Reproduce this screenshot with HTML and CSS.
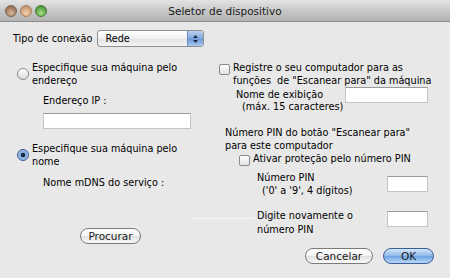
FILE: index.html
```html
<!DOCTYPE html>
<html lang="pt">
<head>
  <meta charset="UTF-8">
  <title>Seletor de dispositivo</title>
  <link rel="stylesheet" href="styles.css">
</head>
<body>
  <div class="window">
    <!-- Title bar -->
    <div class="titlebar">
      <div class="lights">
        <span class="light close"></span>
        <span class="light minimize"></span>
        <span class="light zoom"></span>
      </div>
      <div class="title">Seletor de dispositivo</div>
    </div>

    <div class="content">
      <div class="conn-row">
        <span>Tipo de conexão</span>
        <div class="popup">
          <span>Rede</span>
          <span class="stepper">
            <svg width="7" height="10" viewBox="0 0 7 10"><path d="M3.5 1 L6 4 L1 4 Z M3.5 9 L6 6 L1 6 Z" fill="#1b2a44"/></svg>
          </span>
        </div>
      </div>

      <div class="columns">
        <!-- Left column -->
        <div class="col-left">
          <label class="option">
            <span class="radio"></span>
            <span>Especifique sua máquina pelo<br>endereço</span>
          </label>
          <div class="field-label ip-label">Endereço IP :</div>
          <div class="textbox ip-box"></div>

          <label class="option option-name">
            <span class="radio checked"></span>
            <span>Especifique sua máquina pelo<br>nome</span>
          </label>
          <div class="field-label mdns-label">Nome mDNS do serviço :</div>
          <div class="mdns-line"></div>
          <div class="search-row">
            <button class="btn search">Procurar</button>
          </div>
        </div>

        <!-- Right column -->
        <div class="col-right">
          <label class="check-row">
            <span class="checkbox"></span>
            <span>Registre o seu computador para as<br>funções &nbsp;de "Escanear para" da máquina</span>
          </label>
          <div class="pair display-name">
            <span class="pair-label">Nome de exibição<br><span class="sub">(máx. 15 caracteres)</span></span>
            <div class="textbox name-box"></div>
          </div>

          <div class="pin-title">Número PIN do botão "Escanear para"<br>para este computador</div>
          <label class="check-row pin-check">
            <span class="checkbox"></span>
            <span>Ativar proteção pelo número PIN</span>
          </label>
          <div class="pair pin-pair">
            <span class="pair-label">Número PIN<br><span class="sub">('0' a '9', 4 dígitos)</span></span>
            <div class="textbox pin-box"></div>
          </div>
          <div class="pair pin-pair again">
            <span class="pair-label">Digite novamente o<br>número PIN</span>
            <div class="textbox pin-box"></div>
          </div>
        </div>
      </div>

      <div class="footer">
        <button class="btn cancel">Cancelar</button>
        <button class="btn ok">OK</button>
      </div>
    </div>
  </div>
</body>
</html>
```

FILE: styles.css
```css
/* Base */
body {
  margin: 0;
  background: #e8e8e8;
  font-family: "DejaVu Sans", "Liberation Sans", sans-serif;
  font-size: 9.7px;
  color: #000;
}

.window {
  width: 450px;
  height: 278px;
  overflow: hidden;
  background: #e8e8e8;
}

/* Title bar */
.titlebar {
  height: 21px;
  display: flex;
  align-items: center;
  position: relative;
  background: linear-gradient(#e4e4e4, #c6c6c6 55%, #b2b2b2);
  border-bottom: 1px solid #8c8c8c;
}

.lights {
  display: flex;
  gap: 3px;
  padding-left: 5px;
}

.light {
  width: 12px;
  height: 12px;
  border-radius: 50%;
  box-sizing: border-box;
  border: 1px solid #7d6450;
}

.close {
  background: radial-gradient(circle at 50% 70%, #d9b595, #9a7358 70%);
}

.minimize {
  background: radial-gradient(circle at 50% 70%, #f2d1ae, #c99a72 70%);
  border-color: #a47e5c;
}

.zoom {
  background: radial-gradient(circle at 50% 70%, #a8e08a, #4f9a3a 70%);
  border-color: #4a7a3a;
}

.title {
  position: absolute;
  left: 0;
  right: 0;
  text-align: center;
  font-size: 10.5px;
  color: #1a1a1a;
}

/* Content */
.content {
  padding: 8px 0 0 13px;
}

.conn-row {
  display: flex;
  align-items: center;
  gap: 5px;
  height: 17px;
}

.popup {
  width: 107px;
  height: 17px;
  box-sizing: border-box;
  border: 1px solid #8f8f8f;
  border-radius: 3px;
  background: linear-gradient(#ffffff, #f0f0f0 50%, #e2e2e2 51%, #f4f4f4);
  display: flex;
  align-items: center;
  justify-content: space-between;
  padding-left: 7px;
  overflow: hidden;
}

.stepper {
  width: 15px;
  height: 15px;
  display: flex;
  align-items: center;
  justify-content: center;
  background: linear-gradient(#bcd4f2, #7ea6dc 50%, #6a95d4 51%, #a9c8f0);
  border-left: 1px solid #6f8fbf;
}

.columns {
  display: flex;
}

.col-left {
  width: 206px;
  flex-shrink: 0;
}

.col-right {
  flex: 1;
  white-space: nowrap;
}

/* Radio options */
.option {
  display: flex;
  align-items: center;
  gap: 3px;
  margin-top: 14px;
  line-height: 13px;
  white-space: nowrap;
}

.radio {
  width: 12px;
  height: 12px;
  border-radius: 50%;
  box-sizing: border-box;
  border: 1px solid #8a8a8a;
  background: linear-gradient(#ffffff, #dcdcdc);
  margin-left: 4px;
  flex-shrink: 0;
}

.radio.checked {
  border-color: #3a5b8c;
  background: radial-gradient(circle, #1c2a40 0, #1c2a40 2px, #7ea8de 2.5px, #b8d2f2);
}

.field-label {
  margin-left: 30px;
  margin-top: 7px;
  line-height: 13px;
}

.textbox {
  background: #fff;
  box-sizing: border-box;
  border: 1px solid #c4c4c4;
  border-top-color: #9a9a9a;
  height: 16px;
}

.ip-box {
  margin: 6px 0 0 30px;
  width: 148px;
}

.option-name {
  margin-top: 13px;
}

.mdns-label {
  margin-top: 8px;
}

.mdns-line {
  height: 1px;
  margin: 29px 0 0 179px;
  width: 63px;
  background: #f6f6f6;
}

.search-row {
  margin: 9px 0 0 67px;
}

/* Buttons */
.btn {
  font-family: inherit;
  font-size: 10.5px;
  height: 16px;
  padding: 0;
  border: 1px solid #7a7a7a;
  border-radius: 8px;
  background: linear-gradient(#ffffff, #f2f2f2 50%, #e0e0e0 51%, #fafafa);
  color: #1a1a1a;
  line-height: 13px;
}

.search {
  width: 61px;
}

.footer {
  display: flex;
  justify-content: flex-end;
  gap: 10px;
  padding-right: 16px;
  margin-top: 4px;
}

.cancel {
  width: 68px;
}

.ok {
  width: 51px;
  border-color: #3b5f95;
  background: linear-gradient(#d4e6fb, #8db8ea 50%, #6ea2e0 51%, #b9d8f8);
}

/* Right column */
.check-row {
  display: flex;
  align-items: flex-start;
  gap: 3px;
  line-height: 13px;
  margin-top: 13px;
}

.checkbox {
  width: 11px;
  height: 11px;
  box-sizing: border-box;
  border: 1px solid #8a8a8a;
  border-radius: 2px;
  background: linear-gradient(#ffffff, #e2e2e2);
  margin-top: 4px;
  flex-shrink: 0;
}

.check-row .checkbox + span {
  padding-top: 1px;
}

.pair {
  display: flex;
  justify-content: space-between;
  align-items: flex-start;
  line-height: 12px;
}

.pair-label {
  display: block;
}

.display-name {
  margin: 0 0 0 17px;
  width: 192px;
}

.display-name .pair-label {
  padding-top: 2px;
}

.display-name .sub {
  padding-left: 6px;
}

.name-box {
  width: 83px;
}

.pin-title {
  margin-top: 13px;
  margin-left: 6px;
  line-height: 13px;
}

.pin-check {
  margin: 0 0 0 20px;
}

.pin-check .checkbox {
  margin-top: 3px;
}

.pin-check .checkbox + span {
  padding-top: 0;
}

.pin-pair {
  margin: 5px 0 0 38px;
  width: 171px;
  line-height: 13px;
}

.pin-pair .sub {
  padding-left: 5px;
}

.pin-box {
  width: 41px;
  margin-top: 5px;
}

.pin-pair.again {
  margin-top: 12px;
  line-height: 14px;
}

.pin-pair.again .pin-box {
  margin-top: 2px;
}
```
